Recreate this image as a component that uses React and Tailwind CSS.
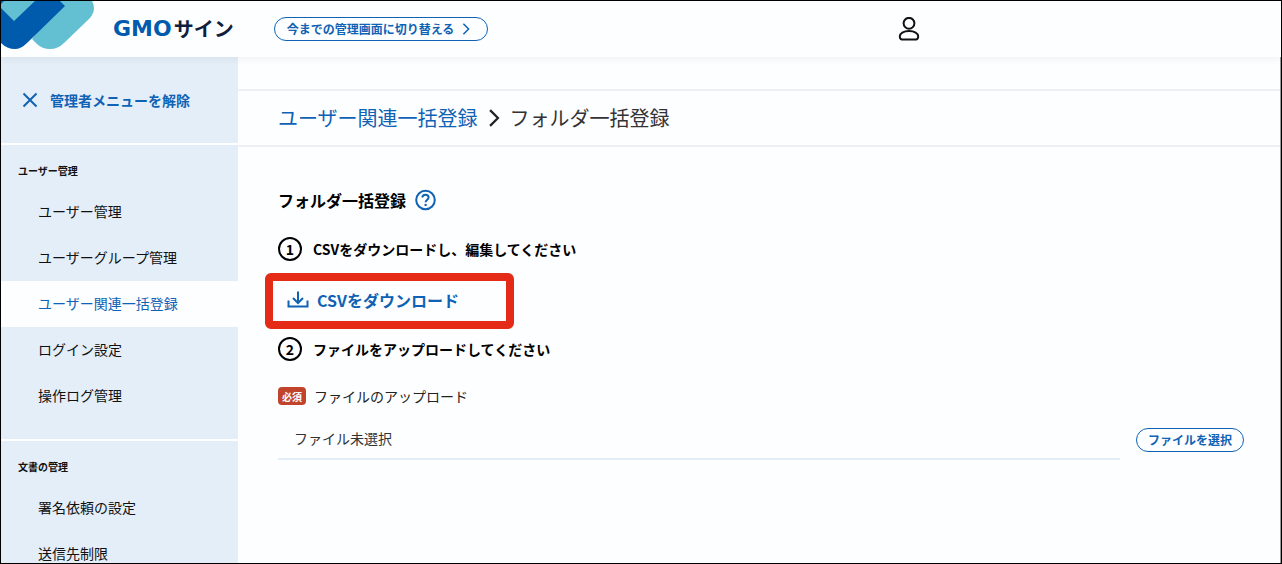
import React, { useRef, useState } from "react";

const menu = [
  {
    title: "ユーザー管理",
    items: [
      { label: "ユーザー管理" },
      { label: "ユーザーグループ管理" },
      { label: "ユーザー関連一括登録", active: true },
      { label: "ログイン設定" },
      { label: "操作ログ管理" },
    ],
  },
  {
    title: "文書の管理",
    items: [{ label: "署名依頼の設定" }, { label: "送信先制限" }],
  },
];

function LogoMark() {
  return (
    <svg width="94" height="56" viewBox="0 0 94 56" className="shrink-0">
      <path
        d="M58 0H91Q93 3 93 7Q93 12 89 17L63 42Q57 48 49 48Q41 48 36 43L31 38Z"
        fill="#63bfd2"
      />
      <path d="M0 0H36L13 23L0 8Z" fill="#63bfd2" />
      <path
        d="M0 7L13 20L34 0H59L64 5L26 42Q20 48 14 48Q6 48 0 42Z"
        fill="#005bac"
      />
      <path d="M0 0H3L0 3Z" fill="#005bac" />
    </svg>
  );
}

function UserIcon() {
  return (
    <svg width="22" height="24" viewBox="0 0 22 24" fill="none" stroke="#111" strokeWidth="2">
      <circle cx="11" cy="6.3" r="5.4" />
      <path d="M11 14C16.5 14 20.2 16.4 20.2 19.4C20.2 22 18.8 22.6 16.5 22.6H5.5C3.2 22.6 1.8 22 1.8 19.4C1.8 16.4 5.5 14 11 14Z" />
    </svg>
  );
}

function Chevron({ className }) {
  return (
    <svg viewBox="0 0 10 16" fill="none" stroke="currentColor" strokeWidth="2" className={className}>
      <path d="M1.5 1L8.5 8L1.5 15" />
    </svg>
  );
}

function HelpIcon() {
  return (
    <svg width="22" height="22" viewBox="0 0 22 22" fill="none" stroke="currentColor" strokeWidth="2">
      <circle cx="11.5" cy="11" r="9.3" />
      <path d="M8.4 8.6C8.4 6.8 9.7 5.7 11.5 5.7C13.3 5.7 14.6 6.8 14.6 8.4C14.6 10.6 11.6 10.8 11.6 13.3" />
      <circle cx="11.6" cy="15.9" r="1.2" fill="currentColor" stroke="none" />
    </svg>
  );
}

function DownloadIcon() {
  return (
    <svg width="22" height="18" viewBox="0 0 22 18" fill="none" stroke="currentColor" strokeWidth="2">
      <path d="M11 0.5V12M6 7L11 12L16 7" />
      <path d="M1.5 9.5V15.5H20.5V9.5" />
    </svg>
  );
}

function Step({ number, children }) {
  return (
    <div className="flex h-6 items-center gap-[11px] text-sm font-bold">
      <span className="flex size-6 items-center justify-center rounded-full border-2 border-black">
        {number}
      </span>
      <p>{children}</p>
    </div>
  );
}

function Header() {
  return (
    <header className="relative z-10 flex h-14 shrink-0 items-center bg-[#fdfeff] shadow-[0_2px_8px_rgba(0,0,0,0.06)]">
      <a href="#" className="flex items-center gap-[18px]">
        <LogoMark />
        <span className="flex items-center gap-0.5 leading-none font-bold">
          <span className="font-['DejaVu_Sans'] text-[22px] text-[#005bac]">GMO</span>
          <span className="text-xl leading-none text-[#111d3c]">サイン</span>
        </span>
      </a>
      <button className="ml-10 flex h-6 w-[214px] items-center gap-1 rounded-full border border-[#0f62b4] pl-3 text-xs font-bold whitespace-nowrap text-[#0f62b4]">
        今までの管理画面に切り替える
        <Chevron className="h-3 w-4" />
      </button>
      <div className="ml-auto flex w-[383px] items-center">
        <button aria-label="アカウント">
          <UserIcon />
        </button>
      </div>
    </header>
  );
}

function Sidebar() {
  return (
    <nav className="flex w-[237px] shrink-0 flex-col gap-0.5 text-[#111]">
      <div className="flex h-[86px] shrink-0 items-center bg-[#e4eef8] px-5">
        <button className="flex items-center gap-[11px] text-sm font-bold text-[#0f62b4]">
          <svg width="18" height="18" viewBox="0 0 18 18" stroke="currentColor" strokeWidth="2">
            <path d="M2.5 2.5L15.5 15.5M15.5 2.5L2.5 15.5" />
          </svg>
          管理者メニューを解除
        </button>
      </div>
      {menu.map((section) => (
        <section key={section.title} className="shrink-0 bg-[#e4eef8] pt-4 pb-5">
          <h2 className="mb-2 px-[17px] text-[10px] leading-5 font-bold">{section.title}</h2>
          <ul>
            {section.items.map((item) => (
              <li key={item.label}>
                <a
                  href="#"
                  className={
                    item.active
                      ? "flex h-[46px] items-center bg-[#fdfeff] pb-0.5 pl-[37px] text-sm text-[#0f62b4]"
                      : "flex h-[46px] items-center pb-0.5 pl-[37px] text-sm"
                  }
                >
                  {item.label}
                </a>
              </li>
            ))}
          </ul>
        </section>
      ))}
    </nav>
  );
}

function UploadField() {
  const fileInput = useRef(null);
  const [fileName, setFileName] = useState("ファイル未選択");

  return (
    <>
      <div className="mt-6 flex h-[22px] items-center gap-2">
        <span className="flex h-[18px] w-7 items-center justify-center rounded bg-[#c0432b] text-[10px] font-bold text-white">
          必須
        </span>
        <label htmlFor="file-name" className="text-sm text-[#222]">
          ファイルのアップロード
        </label>
      </div>
      <div className="mt-3 flex items-center gap-4">
        <input
          id="file-name"
          readOnly
          value={fileName}
          className="h-[41px] min-w-0 flex-1 border-b-2 border-[#e4eef8] bg-transparent px-4 pb-0.5 text-sm text-[#333]"
        />
        <input
          ref={fileInput}
          type="file"
          accept=".csv"
          aria-label="CSVファイル"
          className="hidden"
          onChange={(e) => e.target.files[0] && setFileName(e.target.files[0].name)}
        />
        <button
          onClick={() => fileInput.current.click()}
          className="flex h-6 w-[108px] items-center justify-center rounded-full border border-[#0f62b4] text-xs font-bold text-[#0f62b4]"
        >
          ファイルを選択
        </button>
      </div>
    </>
  );
}

export default function App() {
  return (
    <div className="flex h-screen flex-col overflow-hidden border border-black bg-[#fdfeff] font-['Noto_Sans_CJK_JP',sans-serif] text-black">
      <Header />
      <div className="flex min-h-0 flex-1">
        <Sidebar />
        <main className="min-w-0 flex-1 border-r border-[#999]">
          <div className="h-[34px] border-b-2 border-[#eef0f3]" />
          <div className="flex h-14 items-center border-b-2 border-[#eef0f3] px-10 text-xl">
            <a href="#" className="text-[#0f62b4]">
              ユーザー関連一括登録
            </a>
            <Chevron className="h-[18px] w-8 text-[#222]" />
            <h1 className="text-[#333]">フォルダ一括登録</h1>
          </div>
          <div className="pt-10 pr-9 pl-10">
            <div className="flex h-[26px] items-center gap-2">
              <h2 className="text-base font-bold">フォルダ一括登録</h2>
              <button aria-label="ヘルプ" className="text-[#0f62b4]">
                <HelpIcon />
              </button>
            </div>
            <div className="mt-6">
              <Step number={1}>CSVをダウンロードし、編集してください</Step>
            </div>
            <div className="mt-3 mb-2 -ml-[13px] flex h-14 w-[249px] items-center rounded-md border-8 border-[#e42b18] px-3.5 pb-0.5">
              <button className="flex items-center gap-2 text-base font-bold text-[#0f62b4]">
                <DownloadIcon />
                CSVをダウンロード
              </button>
            </div>
            <Step number={2}>ファイルをアップロードしてください</Step>
            <UploadField />
          </div>
        </main>
      </div>
    </div>
  );
}
